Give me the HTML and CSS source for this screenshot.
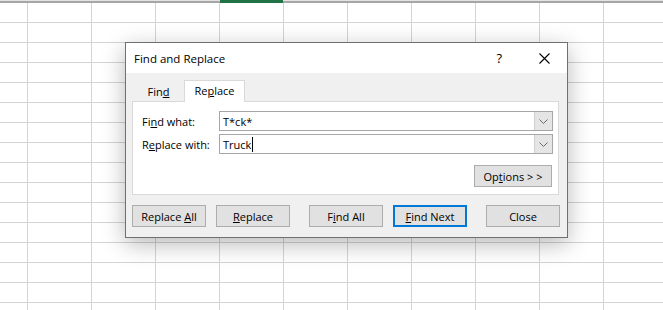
FILE: index.html
```html
<!DOCTYPE html>
<html lang="en">
<head>
    <meta charset="UTF-8">
    <title>Find and Replace</title>
    <link rel="stylesheet" href="styles.css">
</head>
<body>
    <div class="sheet">
        <div class="col-header">
            <div class="col-selected"></div>
        </div>

        <div class="dialog">
            <div class="titlebar">
                <span class="title">Find and Replace</span>
                <span class="help">?</span>
                <svg class="close-x" width="11" height="11" viewBox="0 0 11 11">
                    <path d="M0.5 0.5 L10.5 10.5 M10.5 0.5 L0.5 10.5" stroke="#000" stroke-width="1.1" fill="none"/>
                </svg>
            </div>

            <div class="dialog-body">
                <div class="tabs">
                    <div class="tab">Fin<u>d</u></div>
                    <div class="tab active">Re<u>p</u>lace</div>
                </div>

                <div class="panel">
                    <div class="field-row">
                        <label>Fi<u>n</u>d what:</label>
                        <div class="combo">
                            <span class="combo-text">T*ck*</span>
                            <span class="combo-btn">
                                <svg width="9" height="5" viewBox="0 0 9 5"><path d="M0.5 0.5 L4.5 4.5 L8.5 0.5" stroke="#6b6b6b" fill="none"/></svg>
                            </span>
                        </div>
                    </div>
                    <div class="field-row">
                        <label>R<u>e</u>place with:</label>
                        <div class="combo">
                            <span class="combo-text">Truck<span class="caret"></span></span>
                            <span class="combo-btn">
                                <svg width="9" height="5" viewBox="0 0 9 5"><path d="M0.5 0.5 L4.5 4.5 L8.5 0.5" stroke="#6b6b6b" fill="none"/></svg>
                            </span>
                        </div>
                    </div>
                    <div class="options-row">
                        <button class="btn options-btn">Op<u>t</u>ions &gt; &gt;</button>
                    </div>
                </div>

                <div class="button-row">
                    <button class="btn">Replace <u>A</u>ll</button>
                    <button class="btn"><u>R</u>eplace</button>
                    <button class="btn wide-gap">F<u>i</u>nd All</button>
                    <button class="btn default"><u>F</u>ind Next</button>
                    <button class="btn wide-gap">Close</button>
                </div>
            </div>
        </div>
    </div>
</body>
</html>
```

FILE: styles.css
```css
* {
    margin: 0;
    padding: 0;
    box-sizing: border-box;
}

body {
    font-family: "Open Sans", "Noto Sans", Arial, sans-serif;
    font-size: 11px;
    color: #000;
    background: #fff;
    overflow: hidden;
}

.sheet {
    position: relative;
    width: 663px;
    height: 310px;
    background-color: #fff;
    background-image:
        linear-gradient(to right, #d4d4d4 1px, transparent 1px),
        linear-gradient(to bottom, #d4d4d4 1px, transparent 1px);
    background-size: 64px 20px;
    background-position: 27px 22px;
}

.col-header {
    height: 3px;
    border-top: 1px solid #e3e3e3;
    border-bottom: 2px solid #a6a6a6;
    position: relative;
}

.col-selected {
    position: absolute;
    left: 220px;
    top: -1px;
    width: 63px;
    height: 3px;
    background: #217346;
}

.dialog {
    position: absolute;
    left: 125px;
    top: 42px;
    width: 443px;
    height: 196px;
    border: 1px solid #707070;
    background: #f0f0f0;
    box-shadow: 0 6px 22px rgba(0, 0, 0, 0.28);
}

.titlebar {
    height: 30px;
    background: #fff;
    display: flex;
    align-items: center;
    padding-left: 8px;
}

.title {
    flex: 1;
    font-size: 11.5px;
}

.help {
    font-size: 13px;
    margin-right: 37px;
}

.close-x {
    margin-right: 17px;
}

.dialog-body {
    padding: 7px 7px 0 6px;
}

.tabs {
    display: flex;
    align-items: flex-end;
    height: 21px;
    padding-left: 1px;
}

.tab {
    height: 18px;
    width: 51px;
    text-align: center;
    line-height: 17px;
}

.tab.active {
    height: 22px;
    width: 61px;
    background: #fff;
    border: 1px solid #d9d9d9;
    border-bottom: none;
    line-height: 20px;
    margin-bottom: -1px;
    position: relative;
    z-index: 1;
}

.panel {
    background: #fff;
    border: 1px solid #d9d9d9;
    height: 94px;
    width: 427px;
    padding: 9px 5px 0 9px;
}

.field-row {
    display: flex;
    align-items: center;
    margin-bottom: 3px;
}

.field-row label {
    width: 77px;
}

.combo {
    flex: 1;
    height: 20px;
    border: 1px solid #a6a6a6;
    display: flex;
    align-items: center;
}

.combo-text {
    flex: 1;
    padding-left: 3px;
    display: flex;
    align-items: center;
}

.caret {
    display: inline-block;
    width: 1px;
    height: 15px;
    background: #000;
    margin-left: 1px;
}

.combo-btn {
    width: 18px;
    height: 18px;
    background: #e5e5e5;
    border-left: 1px solid #d0d0d0;
    display: flex;
    align-items: center;
    justify-content: center;
}

.options-row {
    display: flex;
    justify-content: flex-end;
    padding-top: 8px;
    padding-right: 1px;
}

.btn {
    font-family: inherit;
    font-size: 11px;
    color: #000;
    width: 74px;
    height: 22px;
    background: #e1e1e1;
    border: 1px solid #adadad;
}

.options-btn {
    width: 78px;
}

.button-row {
    display: flex;
    margin-top: 10px;
    gap: 10px;
}

.btn.wide-gap {
    margin-left: 9px;
}

.btn.default {
    border: 2px solid #0078d7;
}
```
